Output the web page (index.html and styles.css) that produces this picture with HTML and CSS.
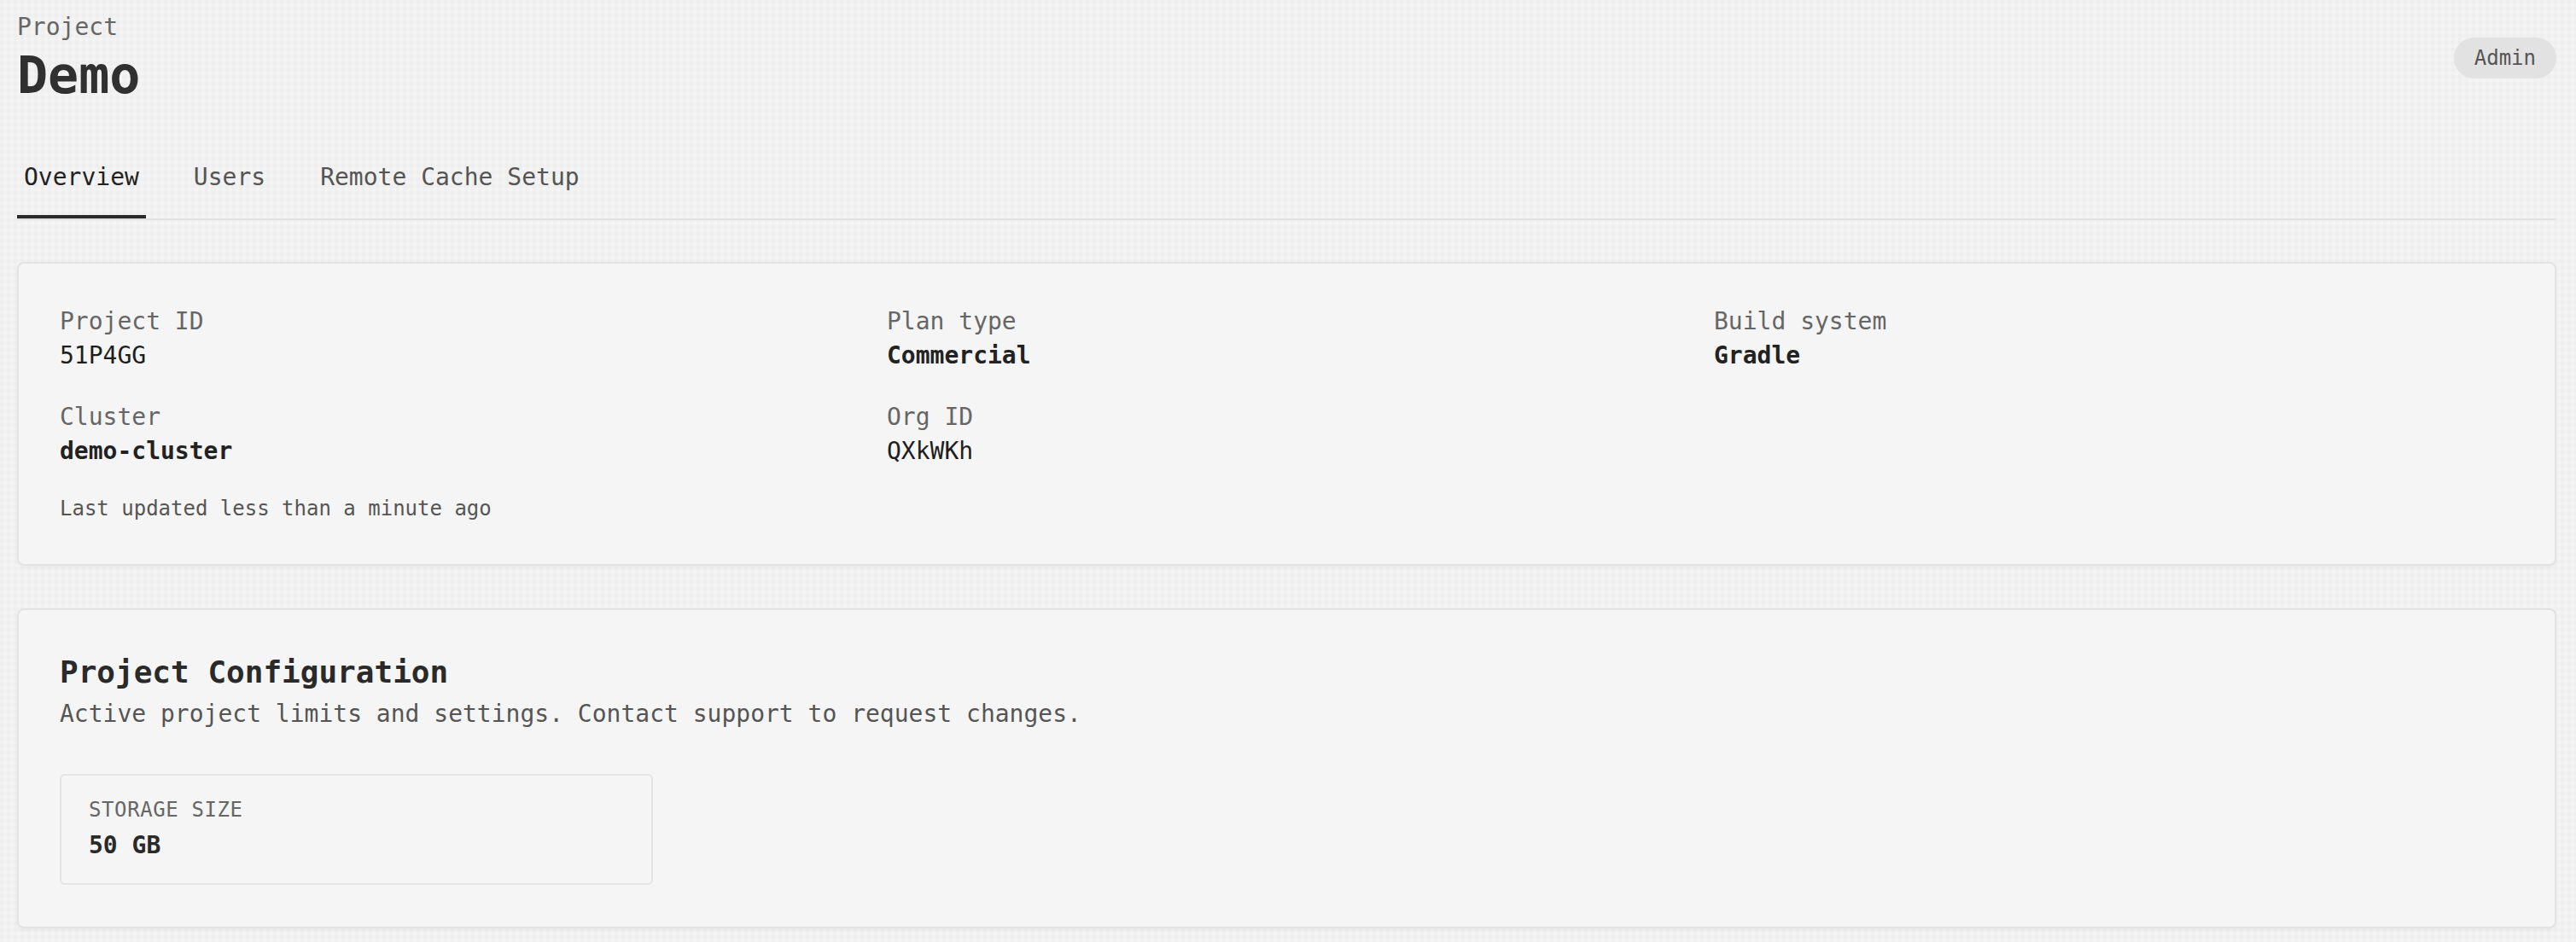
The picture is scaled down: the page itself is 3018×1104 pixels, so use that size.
FILE: index.html
```html
<!DOCTYPE html>
<html lang="en">
<head>
<meta charset="utf-8">
<title>Project Demo</title>
<link rel="stylesheet" href="styles.css">
</head>
<body>
<div class="page">
  <header class="header">
    <div class="heading">
      <div class="eyebrow">Project</div>
      <h1 class="title">Demo</h1>
    </div>
    <span class="badge">Admin</span>
  </header>

  <nav class="tabs">
    <a class="tab tab--active">Overview</a>
    <a class="tab">Users</a>
    <a class="tab">Remote Cache Setup</a>
  </nav>

  <section class="card card--overview">
    <div class="fields">
      <div class="field">
        <div class="field-label">Project ID</div>
        <div class="field-value field-value--id">51P4GG</div>
      </div>
      <div class="field">
        <div class="field-label">Plan type</div>
        <div class="field-value">Commercial</div>
      </div>
      <div class="field">
        <div class="field-label">Build system</div>
        <div class="field-value">Gradle</div>
      </div>
      <div class="field">
        <div class="field-label">Cluster</div>
        <div class="field-value">demo-cluster</div>
      </div>
      <div class="field">
        <div class="field-label">Org ID</div>
        <div class="field-value field-value--id">QXkWKh</div>
      </div>
    </div>
    <div class="updated">Last updated less than a minute ago</div>
  </section>

  <section class="card card--config">
    <h2 class="section-title">Project Configuration</h2>
    <p class="section-desc">Active project limits and settings. Contact support to request changes.</p>
    <div class="limits">
      <div class="limit">
        <div class="limit-label">Storage size</div>
        <div class="limit-value">50 GB</div>
      </div>
    </div>
  </section>
</div>
</body>
</html>
```

FILE: styles.css
```css
* { box-sizing: border-box; }

html, body {
  margin: 0;
  padding: 0;
}

body {
  font-family: "DejaVu Sans Mono", "Liberation Mono", monospace;
  color: #222;
  background-color: #f4f4f4;
  background-image:
    linear-gradient(90deg, rgba(0,0,0,0.013) 50%, transparent 50%),
    linear-gradient(rgba(0,0,0,0.013) 50%, transparent 50%);
  background-size: 8px 8px;
  min-height: 1104px;
}

.page {
  padding: 12px 23px 18px 20px;
}

.header {
  display: flex;
  justify-content: space-between;
  align-items: center;
}

.eyebrow {
  font-size: 28px;
  line-height: 40px;
  color: #666;
}

.title {
  margin: 0;
  font-size: 60px;
  line-height: 72px;
  font-weight: 700;
  color: #303030;
}

.badge {
  font-size: 24px;
  line-height: 32px;
  padding: 8px 24px;
  border-radius: 999px;
  background: #e2e2e2;
  color: #555;
}

.tabs {
  margin-top: 40px;
  display: flex;
  gap: 48px;
  border-bottom: 2px solid #e3e3e3;
}

.tab {
  font-size: 28px;
  line-height: 40px;
  padding: 24px 8px;
  border-bottom: 4px solid transparent;
  color: #555;
  cursor: pointer;
}

.tab--active {
  color: #222;
  border-bottom-color: #2a2a2a;
}

.card {
  background: #f5f5f5;
  border: 2px solid #e3e3e3;
  border-radius: 8px;
  padding: 48px;
  box-shadow: 0 2px 4px rgba(0,0,0,0.04);
}

.card--overview {
  margin-top: 49px;
  padding-bottom: 49px;
}

.card--config {
  margin-top: 50px;
  padding-bottom: 49px;
}

.fields {
  display: grid;
  grid-template-columns: repeat(3, 1fr);
  gap: 32px;
}

.field-label {
  font-size: 28px;
  line-height: 40px;
  color: #666;
}

.field-value {
  font-size: 28px;
  line-height: 40px;
  font-weight: 700;
  color: #222;
}

.field-value--id {
  font-weight: 400;
  color: #1e1e1e;
}

.updated {
  margin-top: 31px;
  font-size: 24px;
  line-height: 32px;
  color: #555;
}

.section-title {
  margin: 0;
  font-size: 36px;
  line-height: 50px;
  font-weight: 700;
  color: #2a2a2a;
}

.section-desc {
  margin: 4px 0 0;
  font-size: 28px;
  line-height: 40px;
  color: #555;
}

.limits {
  margin-top: 50px;
  display: grid;
  grid-template-columns: repeat(4, 1fr);
  gap: 32px;
}

.limit {
  border: 2px solid #e3e3e3;
  border-radius: 6px;
  padding: 24px 32px;
}

.limit-label {
  font-size: 24px;
  line-height: 32px;
  letter-spacing: 0.6px;
  text-transform: uppercase;
  color: #666;
}

.limit-value {
  margin-top: 6px;
  font-size: 28px;
  line-height: 40px;
  font-weight: 700;
  color: #2a2a2a;
}
```
